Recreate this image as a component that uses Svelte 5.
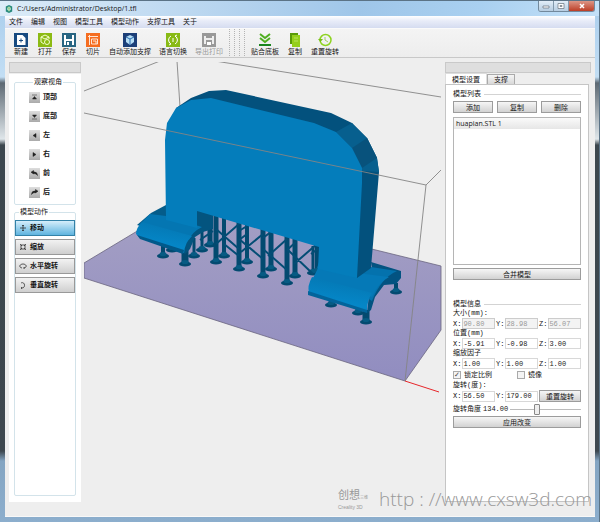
<script lang="ts">
  const menus = ['文件', '编辑', '视图', '模型工具', '模型动作', '支撑工具', '关于'];

  const fileTools = [
    { icon: 'new', label: '新建' },
    { icon: 'open', label: '打开' },
    { icon: 'save', label: '保存' },
    { icon: 'slice', label: '切片' },
    { icon: 'support', label: '自动添加支撑' },
    { icon: 'lang', label: '语言切换' },
    { icon: 'print', label: '导出打印', disabled: true },
  ];
  const modelTools = [
    { icon: 'ground', label: '贴合底板' },
    { icon: 'copy', label: '复制' },
    { icon: 'reset', label: '重置旋转' },
  ];

  const views = [
    { label: '顶部', d: 'M3 3h5M5.5 4.5l2 2.500h-4z' },
    { label: '底部', d: 'M3 8h5M5.5 6.5l2-2.500h-4z' },
    { label: '左', d: 'M7 3.5v4l-3-2z' },
    { label: '右', d: 'M4 3.5v4l3-2z' },
    { label: '前', d: 'M4.5 2.500v3.500L2 4.200zM4.500 3.800q4 0 4 3.700q-1-2-4-2z' },
    { label: '后', d: 'M6.500 2.500v3.500l2.500-1.800zM6.500 3.800q-4 0-4 3.700q1-2 4-2z' },
  ];

  const actions = [
    { id: 'move', label: '移动', d: 'M4 1v6M1 4h6M3 2l1-1 1 1M3 6l1 1 1-1' },
    { id: 'scale', label: '缩放', d: 'M1 1l2 2M7 1L5 3M1 7l2-2M7 7L5 5M1 3h2V1M7 3H5V1M1 5h2v2M7 5H5v2' },
    { id: 'spin', label: '水平旋转', d: 'M3 6C-1 5 1 2 4 2s5 3 1 4M5 5v2' },
    { id: 'tilt', label: '垂直旋转', d: 'M2 2c4-2 5 5 1 5M2 6l1 1-1 1' },
  ];
  let action = $state('move');
  let tab = $state('model');
  let lock = $state(true);
  let mirror = $state(false);
  let angle = $state(134);

  const vectors = [
    { title: '大小(mm):', values: ['90.80', '28.98', '56.07'], disabled: true },
    { title: '位置(mm)', values: ['-5.91', '-0.98', '3.00'], disabled: false },
    { title: '缩放因子', values: ['1.00', '1.00', '1.00'], disabled: false },
  ];
  const axes = ['X', 'Y', 'Z'];

  // support pillars: x, top, foot, width
  const pillars = [
    [202, 226, 250, 3], [210, 215, 245, 5], [194, 238, 256, 3], [172, 244, 250, 3],
    [163, 244, 256, 4], [185, 250, 264, 7], [224, 217, 256, 4], [216, 215, 262, 5],
    [247, 223, 262, 4], [239, 221, 269, 5], [271, 229, 269, 5], [263, 228, 276, 5],
    [295, 239, 276, 5], [287, 236, 283, 5], [317, 246, 272, 4], [313, 246, 273, 3],
    [331, 300, 305, 4], [358, 308, 313, 5], [366, 310, 322, 7], [396, 283, 292, 4],
  ];
</script>

{#snippet toolIcon(name: string)}
  <svg class="tool-icon" viewBox="0 0 14 14" aria-hidden="true">
    {#if name === 'new'}
      <rect width="14" height="14" fill="#174a80" />
      <path d="M3 2h5.500l3 3v7H3z" fill="#fff" />
      <path d="M7 5.500v4M5 7.500h4" stroke="#174a80" />
    {:else if name === 'open'}
      <rect width="14" height="14" fill="#8cba13" />
      <g fill="none" stroke="#f4ffd2"><path d="M3 9V4l4-2 4 2v2M3 4l4 2 4-2M3 9l3 2" /><circle cx="9" cy="9" r="2.500" /></g>
    {:else if name === 'save'}
      <rect width="14" height="14" fill="#286582" />
      <path d="M2 2h10v10H2z" fill="#fff" /><path d="M4 2h6v4H4zM4 8h6v4H4z" fill="#286582" />
      <path d="M5 9h2v3H5z" fill="#fff" />
    {:else if name === 'slice'}
      <rect width="14" height="14" fill="#f56d20" />
      <g fill="none" stroke="#ffe5d4"><path d="M2 3.500h10M3.500 2v10M5.500 6h6v5h-6zM7 8h3v3" /></g>
    {:else if name === 'support'}
      <rect width="14" height="14" fill="#1c3f78" />
      <path d="M7 2l4 2v5l-4 3-4-3V4z" fill="#b6def5" />
      <path d="M3 4l4 2 4-2M7 6v6" fill="none" stroke="#286bb0" />
    {:else if name === 'lang'}
      <rect width="14" height="14" fill="#88ba15" />
      <g fill="none" stroke="#fff"><path d="M5 3a4.500 4.500 0 0 0 0 8M9 3a4.500 4.500 0 0 1 0 8M3 9l2 2-2 1M11 5L9 3l2-1" /><path d="M7 5v4" /></g>
    {:else if name === 'print'}
      <rect width="14" height="14" fill="#999" />
      <path d="M2 3h10v8H2z" fill="#eee" /><path d="M4 2h6v3H4zM4 7h6v4H4z" fill="#999" /><path d="M5 9h4v3H5z" fill="#fff" />
    {:else if name === 'ground'}
      <path d="M2 1l5 4 5-4M2 5l5 4 5-4" fill="none" stroke="#4fae20" stroke-width="2" />
      <path d="M1 12h12" stroke="#19851e" stroke-width="2" />
    {:else if name === 'copy'}
      <path d="M2 0h8v11H2z" fill="#599a08" /><path d="M4 2h8v12H4z" fill="#94cf1c" />
      <path d="M6 5h4M6 8h4" stroke="#b8e45d" />
    {:else}
      <circle cx="7.500" cy="7" r="5.500" fill="none" stroke="#8ed321" stroke-width="1.500" />
      <path d="M0 6h5L2.500 9z" fill="#76bd16" /><path d="M7 4v3l3 2" fill="none" stroke="#9fce62" />
    {/if}
  </svg>
{/snippet}

<div class="window">
  <header class="titlebar">
    <svg class="app-icon" viewBox="0 0 10 10" aria-hidden="true">
      <path d="M5 0l4 2v6L5 10 1 8V2z" fill="#27897c" /><path d="M5 2l2 1v3L5 8 3 6V3z" fill="#e7faf0" /><path d="M3 3l2 1 2-1M5 4v4" stroke="#57ad4d" fill="none" />
    </svg>
    <h1>C:/Users/Administrator/Desktop/1.tfl</h1>
    <div class="win-buttons">
      <button type="button" aria-label="最小化"><svg viewBox="0 0 8 6"><path d="M1 3h6v2H1z" /></svg></button>
      <button type="button" aria-label="最大化"><svg viewBox="0 0 8 6"><path d="M1 .5h6v5H1zM3 2.500h2v1H3z" /></svg></button>
      <button type="button" class="close" aria-label="关闭"><svg viewBox="0 0 8 6"><path d="M2 1l4 4M6 1L2 5" /></svg></button>
    </div>
  </header>

  <div class="client">
    <nav class="menubar">
      {#each menus as m}<button type="button">{m}</button>{/each}
    </nav>

    <div class="toolbar">
      {#each fileTools as t}
        <button type="button" disabled={t.disabled}>{@render toolIcon(t.icon)}<span>{t.label}</span></button>
      {/each}
      <span class="grip"></span>
      {#each modelTools as t}
        <button type="button">{@render toolIcon(t.icon)}<span>{t.label}</span></button>
      {/each}
    </div>

    <main>
      <aside class="dock left">
        <div class="dock-title"></div>
        <div class="left-body">
          <fieldset class="views">
            <legend>观察视角</legend>
            {#each views as v}
              <button type="button"><svg viewBox="0 0 11 11" aria-hidden="true"><path d={v.d} /></svg>{v.label}</button>
            {/each}
          </fieldset>
          <fieldset class="actions">
            <legend>模型动作</legend>
            {#each actions as a}
              <button type="button" class:active={action === a.id} onclick={() => (action = a.id)}>
                <svg viewBox="0 0 8 8" aria-hidden="true"><path d={a.d} /></svg>{a.label}
              </button>
            {/each}
          </fieldset>
        </div>
      </aside>

      <section class="viewport" aria-label="模型">
        <svg viewBox="84 62 358 334" preserveAspectRatio="xMinYMin meet">
          <defs>
            <linearGradient id="plate" x1="0" y1="0" x2="0" y2="1">
              <stop offset="0" stop-color="#a5a0c4" /><stop offset="1" stop-color="#918dc0" />
            </linearGradient>
            <linearGradient id="foot" x1=".3" y1="0" x2="0" y2="1">
              <stop offset="0" stop-color="#0478b4" /><stop offset=".65" stop-color="#0587c8" /><stop offset="1" stop-color="#0475b2" />
            </linearGradient>
          </defs>
          <path d="M84 91L160 61M177 61l3 46M215 61l226 36" class="wire" />
          <path d="M84 263L184 203 441 266V330L405 381 84 278z" fill="url(#plate)" stroke="#69657f" stroke-width=".8" />

          <!-- supports -->
          <g fill="#034a70">
            {#each pillars as [x, top, base, w]}
              <rect x={x - w / 2} y={top} width={w} height={base - top} />
              <ellipse cx={x} cy={base} rx="6" ry="2.600" />
              <ellipse cx={x} cy={base - 2} rx="3.500" ry="2" fill="#075b83" />
            {/each}
          </g>
          <path d="M200 240l13-9M216 229l23 20M216 244l23-20M224 244l15 12M239 231l8-5M239 240l8-6M239 239l24 20M241 252l22-18M263 238l9-7M263 249l24 21M268 256l19-17M287 250l9-8M287 249l26 25M294 264l23-20M311 254l8-6" fill="none" stroke="#044d75" stroke-width="2" />

          <!-- left foot -->
          <path d="M137 225l14-12 15-8 40 14-6 14-16 6z" fill="#045c8a" />
          <path d="M197 210l16 4v15l-10 3-8 5-5 12-5 5-3-2 8-20z" fill="#03547f" />
          <path d="M150 214l16 2 36 11q-10 5-13 13l-50-15z" fill="#0476b2" />
          <path d="M142 222l50 14q-7 6-8 17l-44-15-4-4q0-6 6-12z" fill="url(#foot)" />
          <path d="M137 235l47 15-1 4-43-15z" fill="#02598a" />

          <!-- right foot -->
          <path d="M371 262l30 9v7l-5 6-12 1-9 12-4 13-4 3 5-45z" fill="#035381" />
          <path d="M317 268l2-6 52 5 26 4q-16 7-25 30z" fill="#0472ad" />
          <path d="M318 268l71 9q-10 5-17 20l-60-17z" fill="#0579b7" />
          <path d="M312 277l60 16q-5 7-5 18l-58-18q-2-7 3-16z" fill="url(#foot)" />
          <path d="M308 291l59 19v3l-59-18z" fill="#03649b" />

          <!-- body -->
          <path d="M176 108L191 98 209 91 226 90 331 113 352 123 367 138 377 158 379 172 371 268 357 278 200 120z" fill="#03517d" />
          <path d="M336 132l16-9 15 15 10 20 2 14-17-1-10-23z" fill="#075f8e" />
          <path d="M352 148l15-10 10 20-15 10z" fill="#08527c" />
          <path d="M165 140L167 123 176 108 191 100 211 98 314 123 336 132 352 148 362 168V183L357 278 318 269 319 247 197 211V228L166 220z" fill="#047dbb" />

          <path d="M84 113l342 72 15-15M426 185l-21 196" class="wire" />
          <path d="M405 381l34 11" fill="none" stroke="#e7262a" />
        </svg>
      </section>

      <aside class="dock right">
        <div class="dock-title"></div>
        <div class="tabs" role="tablist">
          <button type="button" role="tab" aria-selected={tab === 'model'} onclick={() => (tab = 'model')}>模型设置</button>
          <button type="button" role="tab" aria-selected={tab === 'support'} onclick={() => (tab = 'support')}>支撑</button>
        </div>
        <div class="pane">
          <h2>模型列表</h2>
          <div class="btn-row">
            <button type="button" class="btn">添加</button>
            <button type="button" class="btn">复制</button>
            <button type="button" class="btn">删除</button>
          </div>
          <ul class="models"><li>huapian.STL 1</li></ul>
          <button type="button" class="btn wide">合并模型</button>

          <h2 class="info">模型信息</h2>
          {#each vectors as v}
            <p>{v.title}</p>
            <div class="vector">
              {#each v.values as value, i}
                <label><span>{axes[i]}:</span><input type="text" {value} disabled={v.disabled} /></label>
              {/each}
            </div>
          {/each}
          <div class="checks">
            <label><input type="checkbox" bind:checked={lock} />锁定比例</label>
            <label><input type="checkbox" bind:checked={mirror} />镜像</label>
          </div>
          <p>旋转(度):</p>
          <div class="vector">
            <label><span>X:</span><input type="text" value="56.50" /></label>
            <label><span>Y:</span><input type="text" value="179.00" /></label>
            <button type="button" class="btn">重置旋转</button>
          </div>
          <div class="angle">
            <label for="angle">旋转角度</label>
            <output for="angle">{angle.toFixed(2)}</output>
            <input id="angle" type="range" min="0" max="360" bind:value={angle} />
          </div>
          <button type="button" class="btn wide">应用改变</button>
        </div>
      </aside>
    </main>
  </div>

  <div class="watermark">
    <div class="brand"><span class="name">创想<small>三维</small></span><span class="sub">Creality 3D</span></div>
    <span class="url">http : //www.cxsw3d.com</span>
  </div>
</div>

<style>
  :global(body) {
    margin: 0;
  }

  .window {
    position: relative;
    box-sizing: border-box;
    min-height: 100vh;
    display: flex;
    flex-direction: column;
    padding: 0 4px 5px 5px;
    border: 1px solid #5b7386;
    border-width: 1px 1px 0 0;
    background: linear-gradient(#a9cdec 0, #c2def4 76px, #5d6973 82px, #dfe6ea 138px, #3c474e 144px, #3e484f 450px, #84a5c2 460px, #8caecd 100%);
    font-family: 'Liberation Sans', 'Noto Sans CJK SC', sans-serif;
    font-size: 7px;
    line-height: 10px;
    color: #151515;
  }

  button {
    font: inherit;
    color: inherit;
    padding: 0;
    margin: 0;
    border: 0;
    background: none;
    white-space: nowrap;
  }

  /* Title bar */
  .titlebar {
    display: flex;
    align-items: center;
    height: 15px;
    margin: 0 -4px 0 -5px;
    padding: 0 4px 0 5px;
    background: linear-gradient(100deg, #dcecf8 0, #c3dcf2 25%, #9fc6e9 60%, #a9d0f0 80%, #c4e1f8);
  }
  .app-icon {
    width: 8px;
    height: 8px;
  }
  h1 {
    flex: 1;
    margin: 0 0 0 4px;
    font: 400 7px/10px 'Open Sans', sans-serif;
  }
  .win-buttons {
    display: flex;
    align-self: flex-start;
    height: 10px;
    border: 1px solid #72899c;
    border-top: 0;
    border-radius: 0 0 3px 3px;
    overflow: hidden;
  }
  .win-buttons button {
    display: flex;
    align-items: center;
    justify-content: center;
    width: 15px;
    border-right: 1px solid #8299ab;
    background: linear-gradient(#e2eef8, #b6cde1);
  }
  .win-buttons .close {
    width: 25px;
    border: 0;
    background: linear-gradient(#dc9686, #bd3e26);
  }
  .win-buttons svg {
    width: 8px;
    height: 6px;
    fill: #fff;
    stroke: #66717b;
    stroke-width: 0.7;
  }
  .win-buttons .close svg {
    stroke: #fff;
    stroke-width: 1.5;
  }

  .client {
    flex: 1;
    display: flex;
    flex-direction: column;
    background: #eee;
    border-bottom: 1px solid #f8f8f8;
  }

  .menubar {
    display: flex;
    gap: 8px;
    align-items: center;
    height: 12px;
    padding: 0 4px;
    background: linear-gradient(#fff, #e8ecf8 40%, #d5dcf0);
  }

  .toolbar {
    display: flex;
    gap: 8px;
    padding: 4px 8px 1px;
    border-top: 1px solid #fafafa;
    border-bottom: 1px solid #c8c8c8;
    background: linear-gradient(#f4f4f4, #ededed);
  }
  .toolbar button {
    min-width: 16px;
    display: flex;
    flex-direction: column;
    align-items: center;
    line-height: 9px;
  }
  .toolbar button:disabled {
    color: #999;
  }
  .tool-icon {
    width: 14px;
    height: 14px;
  }
  .grip {
    width: 16px;
    margin: -4px -2px 0;
    background: repeating-linear-gradient(90deg, #b4b4b4 0 1px, transparent 1px 5px);
    -webkit-mask: repeating-linear-gradient(#000 0 1px, transparent 1px 2px);
    mask: repeating-linear-gradient(#000 0 1px, transparent 1px 2px);
  }

  main {
    flex: 1;
    display: grid;
    grid-template-columns: 72px 1fr 146px;
    gap: 3px;
    padding: 4px 4px 0;
  }
  .dock {
    display: flex;
    flex-direction: column;
    margin-bottom: 14px;
  }
  .dock-title {
    height: 9px;
    border: 1px solid #c9c9c9;
    background: #dedede;
  }

  /* Left dock */
  .left-body {
    flex: 1;
    display: flex;
    flex-direction: column;
    gap: 2px;
    margin-top: 1px;
    padding: 3px 5px 6px;
    background: #fff;
  }
  fieldset {
    min-width: 0;
    margin: 0;
    padding: 0;
    border: 1px solid #d3e3ea;
    border-radius: 2px;
  }
  legend {
    margin-left: 4px;
    padding: 0 1px;
  }
  .views {
    display: flex;
    flex-direction: column;
    align-items: flex-start;
    gap: 7px;
    padding: 4px 0 6px 14px;
  }
  .views button {
    display: flex;
    align-items: center;
    gap: 3px;
    height: 12px;
    font-weight: 700;
  }
  .views svg {
    width: 11px;
    height: 11px;
    background: linear-gradient(#ddd, #aaa);
    fill: #222;
    stroke: #222;
    stroke-width: 0.5;
  }
  .actions {
    flex: 1;
  }
  .actions button {
    display: flex;
    align-items: center;
    gap: 3px;
    box-sizing: border-box;
    width: 100%;
    height: 16px;
    margin-top: 3px;
    padding: 0 3px;
    border: 1px solid #999;
    background: linear-gradient(#f2f2f2, #cfcfcf);
    font-weight: 700;
  }
  .actions .active {
    border-color: #3382a8;
    background: linear-gradient(#d5eefb, #5fb4df);
  }
  .actions svg {
    width: 8px;
    height: 8px;
    fill: none;
    stroke: #333;
    stroke-width: 0.8;
  }

  /* Viewport */
  .viewport svg {
    display: block;
    width: 100%;
  }
  .wire {
    fill: none;
    stroke: #858585;
    stroke-width: 0.9;
  }

  /* Right dock */
  .tabs {
    display: flex;
    align-items: flex-end;
  }
  .tabs button {
    height: 10px;
    padding: 0 6px;
    border: 1px solid #aaa;
    border-bottom: 0;
    background: linear-gradient(#f5f5f5, #d8d8d8);
    line-height: 9px;
  }
  .tabs button[aria-selected='true'] {
    height: 12px;
    margin-bottom: -1px;
    border-color: #ddd;
    background: #fff;
    line-height: 11px;
  }
  .pane {
    flex: 1;
    margin-right: 2px;
    padding: 4px 7px;
    border: 1px solid #c5c5c5;
    background: #fff;
  }
  h2 {
    display: flex;
    align-items: center;
    gap: 3px;
    margin: 0;
    font-size: 7px;
    font-weight: 400;
  }
  h2::after {
    content: '';
    flex: 1;
    border-top: 1px solid #d3d3d3;
  }
  .info {
    margin-top: 19px;
  }
  .btn {
    height: 12px;
    border: 1px solid #9c9c9c;
    background: linear-gradient(#f6f6f6, #e4e4e4 50%, #d2d2d2);
    line-height: 9px;
  }
  .wide {
    display: block;
    width: 100%;
  }
  .btn-row {
    display: grid;
    grid-template-columns: repeat(3, 1fr);
    gap: 4px;
    margin: 2px 0 4px;
  }
  .models {
    min-height: 146px;
    margin: 0 0 3px;
    padding: 0;
    border: 1px solid #b5b5b5;
    list-style: none;
  }
  .models li {
    padding: 0 2px;
    background: linear-gradient(#fafafa, #e6e6e6);
    font-family: 'Open Sans', sans-serif;
    line-height: 11px;
  }
  p {
    margin: 0;
    font-family: 'Liberation Mono', 'Noto Sans CJK SC', monospace;
    line-height: 9px;
  }
  .vector {
    display: grid;
    grid-template-columns: repeat(3, 1fr);
    gap: 1px;
  }
  .vector label {
    display: flex;
    align-items: center;
    font-family: 'Liberation Mono', monospace;
  }
  .vector input {
    box-sizing: border-box;
    min-width: 0;
    width: 100%;
    height: 11px;
    margin-left: 1px;
    padding: 0;
    border: 1px solid #d8d8d8;
    background: #fff;
    color: #222;
    font: 7px/9px 'Liberation Mono', monospace;
  }
  .vector input:disabled {
    border-color: #ccc;
    background: #f3f3f3;
    color: #999;
  }
  .checks {
    display: grid;
    grid-template-columns: 1fr 1fr;
    padding: 1px 0;
  }
  .checks label {
    display: flex;
    align-items: center;
    gap: 3px;
  }
  .checks input {
    display: grid;
    place-items: center;
    width: 8px;
    height: 8px;
    margin: 0;
    appearance: none;
    border: 1px solid #aaa;
    background: #f4f4f4;
  }
  .checks input:checked::before {
    content: '✓';
    color: #444;
    font: 7px/6px 'DejaVu Sans', sans-serif;
  }
  .angle {
    display: flex;
    align-items: center;
    gap: 2px;
    height: 14px;
  }
  .angle output {
    font-family: 'Liberation Mono', monospace;
  }
  .angle input {
    flex: 1;
    min-width: 0;
    height: 11px;
    margin: 0;
    appearance: none;
    background: linear-gradient(#bbb, #bbb) center / 100% 1px no-repeat;
  }
  .angle input::-webkit-slider-thumb {
    appearance: none;
    width: 6px;
    height: 11px;
    border: 1px solid #888;
    border-radius: 1px;
    background: #eee;
  }

  .watermark {
    position: absolute;
    right: 7px;
    bottom: 10px;
    display: flex;
    align-items: center;
    gap: 11px;
    color: #999;
    pointer-events: none;
  }
  .brand {
    display: flex;
    flex-direction: column;
    line-height: 5px;
  }
  .name {
    font-size: 11px;
    line-height: 14px;
  }
  .name small {
    font-size: 4px;
  }
  .sub {
    font-size: 5px;
  }
  .url {
    font: 300 19px/26px 'Open Sans', 'Noto Sans', sans-serif;
    white-space: nowrap;
  }
</style>
